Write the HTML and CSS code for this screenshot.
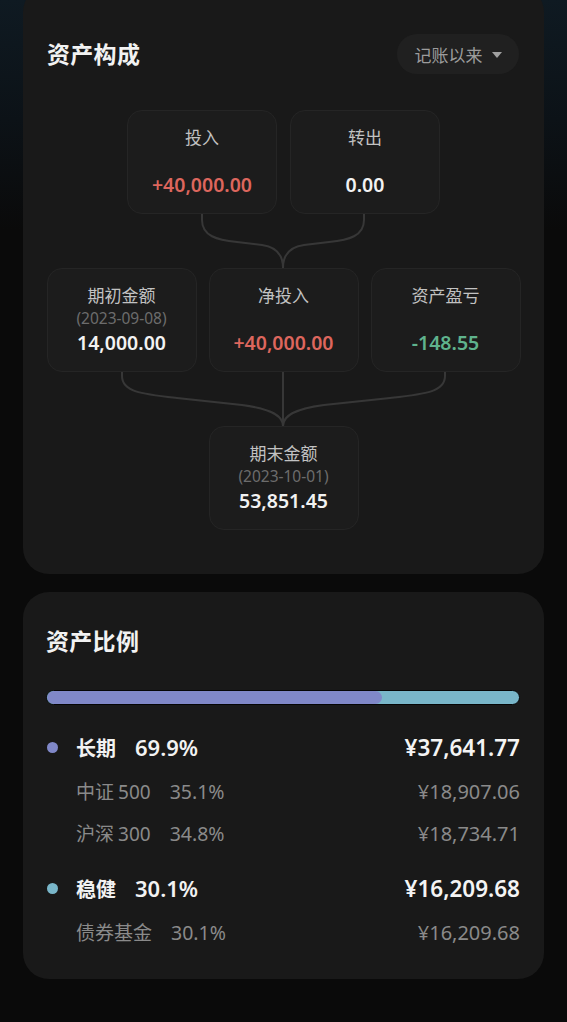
FILE: index.html
```html
<!DOCTYPE html>
<html lang="zh-CN">
<head>
<meta charset="utf-8">
<link rel="stylesheet" href="styles.css">
</head>
<body>
<div class="page">
  <section class="card comp">
    <div class="card-head">
      <h2 class="title">资产构成</h2>
      <div class="pill">记账以来<span class="caret"></span></div>
    </div>
    <div class="diagram">
      <div class="row row-top">
        <div class="box"><div class="lbl">投入</div><div class="val red">+40,000.00</div></div>
        <div class="box"><div class="lbl">转出</div><div class="val">0.00</div></div>
      </div>
      <svg class="link" width="473" height="54" viewBox="0 0 473 54">
        <path d="M155 0 V6 C155 22 170 26 190 28 L215 31 C230 33 236 42 236 54" />
        <path d="M317 0 V6 C317 22 302 26 282 28 L257 31 C242 33 236 42 236 54" />
      </svg>
      <div class="row">
        <div class="box"><div class="lbl">期初金额</div><div class="date">(2023-09-08)</div><div class="val">14,000.00</div></div>
        <div class="box"><div class="lbl">净投入</div><div class="val red">+40,000.00</div></div>
        <div class="box"><div class="lbl">资产盈亏</div><div class="val green">-148.55</div></div>
      </div>
      <svg class="link" width="473" height="54" viewBox="0 0 473 54">
        <path d="M75 0 V4 C75 20 95 22 130 26 L195 33 C225 37 236 44 236 54" />
        <path d="M398 0 V4 C398 20 378 22 343 26 L277 33 C247 37 236 44 236 54" />
        <path d="M236 0 V54" />
      </svg>
      <div class="row">
        <div class="box"><div class="lbl">期末金额</div><div class="date">(2023-10-01)</div><div class="val">53,851.45</div></div>
      </div>
    </div>
  </section>

  <section class="card ratio">
    <h2 class="title">资产比例</h2>
    <div class="bar"><div class="bar-fill" style="width:70.9%"></div></div>
    <div class="group">
      <div class="main-row">
        <span class="dot dot-purple"></span>
        <span class="name">长期</span><span class="pct">69.9%</span>
        <span class="amt">¥37,641.77</span>
      </div>
      <div class="sub-row"><span class="sname">中证<span class="num">500</span></span><span class="spct">35.1%</span><span class="samt">¥18,907.06</span></div>
      <div class="sub-row sub-2"><span class="sname">沪深<span class="num">300</span></span><span class="spct">34.8%</span><span class="samt">¥18,734.71</span></div>
    </div>
    <div class="group group-2">
      <div class="main-row">
        <span class="dot dot-teal"></span>
        <span class="name">稳健</span><span class="pct">30.1%</span>
        <span class="amt">¥16,209.68</span>
      </div>
      <div class="sub-row"><span class="sname">债券基金</span><span class="spct">30.1%</span><span class="samt">¥16,209.68</span></div>
    </div>
  </section>
</div>
</body>
</html>
```

FILE: styles.css
```css
* { box-sizing: border-box; }
html, body { margin: 0; padding: 0; }
body {
  width: 567px;
  height: 1022px;
  overflow: hidden;
  background: linear-gradient(180deg, #0f1a22 0px, #0c1217 120px, #0a0a0a 230px, #0a0a0a 100%);
  font-family: "Noto Sans", "Noto Sans CJK SC", sans-serif;
  color: #f0f0f0;
}
.page {
  padding: 0 23px;
  display: flex;
  flex-direction: column;
  gap: 18px;
}
.card {
  background: #191919;
  border-radius: 26px;
}
.comp {
  margin-top: -14px;
  height: 588px;
  padding: 48px 24px 0 24px;
}
.card-head {
  display: flex;
  justify-content: space-between;
  align-items: center;
  height: 40px;
}
.title {
  margin: 0;
  font-size: 23px;
  font-weight: 600;
  line-height: 30px;
  color: #f2f2f2;
  letter-spacing: 0.3px;
}
.pill {
  height: 40px;
  width: 122px;
  margin-right: 1px;
  border-radius: 20px;
  background: #202020;
  color: #9c9c9c;
  font-size: 17px;
  display: flex;
  align-items: center;
  justify-content: center;
  gap: 9px;
}
.caret {
  width: 0; height: 0;
  border-left: 5px solid transparent;
  border-right: 5px solid transparent;
  border-top: 6px solid #a0a0a0;
  margin-top: 1px;
}
.diagram {
  margin-top: 36px;
  display: flex;
  flex-direction: column;
  align-items: center;
}
.row {
  display: flex;
  gap: 12px;
  justify-content: center;
}
.row-top { gap: 13px; }
.link { display: block; fill: none; stroke: #373737; stroke-width: 2; }
.box {
  width: 150px;
  height: 104px;
  background: #1c1c1c;
  border: 1px solid #252525;
  border-radius: 15px;
  display: flex;
  flex-direction: column;
  align-items: center;
  padding: 16px 0 15px;
}
.lbl {
  font-size: 17px;
  line-height: 22px;
  color: #c2c2c2;
}
.date {
  font-size: 15.5px;
  line-height: 22px;
  color: #6c6c6c;
}
.val {
  margin-top: auto;
  font-size: 19.5px;
  line-height: 26px;
  font-weight: 600;
  color: #f2f2f2;
}
.red { color: #dd665d; }
.green { color: #5fb38d; }

.ratio {
  height: 387px;
  padding: 34px 24px 0 23px;
}
.bar {
  margin-top: 34px;
  height: 15px;
  border-radius: 8px;
  background: #79b6c9;
  border: 1px solid #050505;
  overflow: hidden;
}
.bar-fill {
  height: 100%;
  background: #8088c8;
  border-radius: 7px;
}
.group { margin-top: 27px; }
.group-2 { margin-top: 25px; }
.main-row, .sub-row {
  display: flex;
  align-items: center;
  height: 30px;
}
.main-row { font-weight: 600; }
.sub-row { margin-top: 14px; padding-left: 30px; color: #8a8a8a; }
.sub-2 { margin-top: 12px; }
.dot {
  width: 11px; height: 11px;
  border-radius: 50%;
  margin-left: 1px;
  margin-right: 18px;
}
.dot-purple { background: #8088c8; }
.dot-teal { background: #79b6c9; }
.name { font-size: 20px; color: #f2f2f2; }
.pct { font-size: 22px; margin-left: 19px; color: #f2f2f2; }
.amt { margin-left: auto; font-size: 22.5px; color: #f4f4f4; }
.sname { font-size: 19px; }
.num { margin-left: 4px; font-size: 19px; }
.spct { font-size: 19.5px; margin-left: 19px; }
.samt { margin-left: auto; font-size: 20px; }
```
